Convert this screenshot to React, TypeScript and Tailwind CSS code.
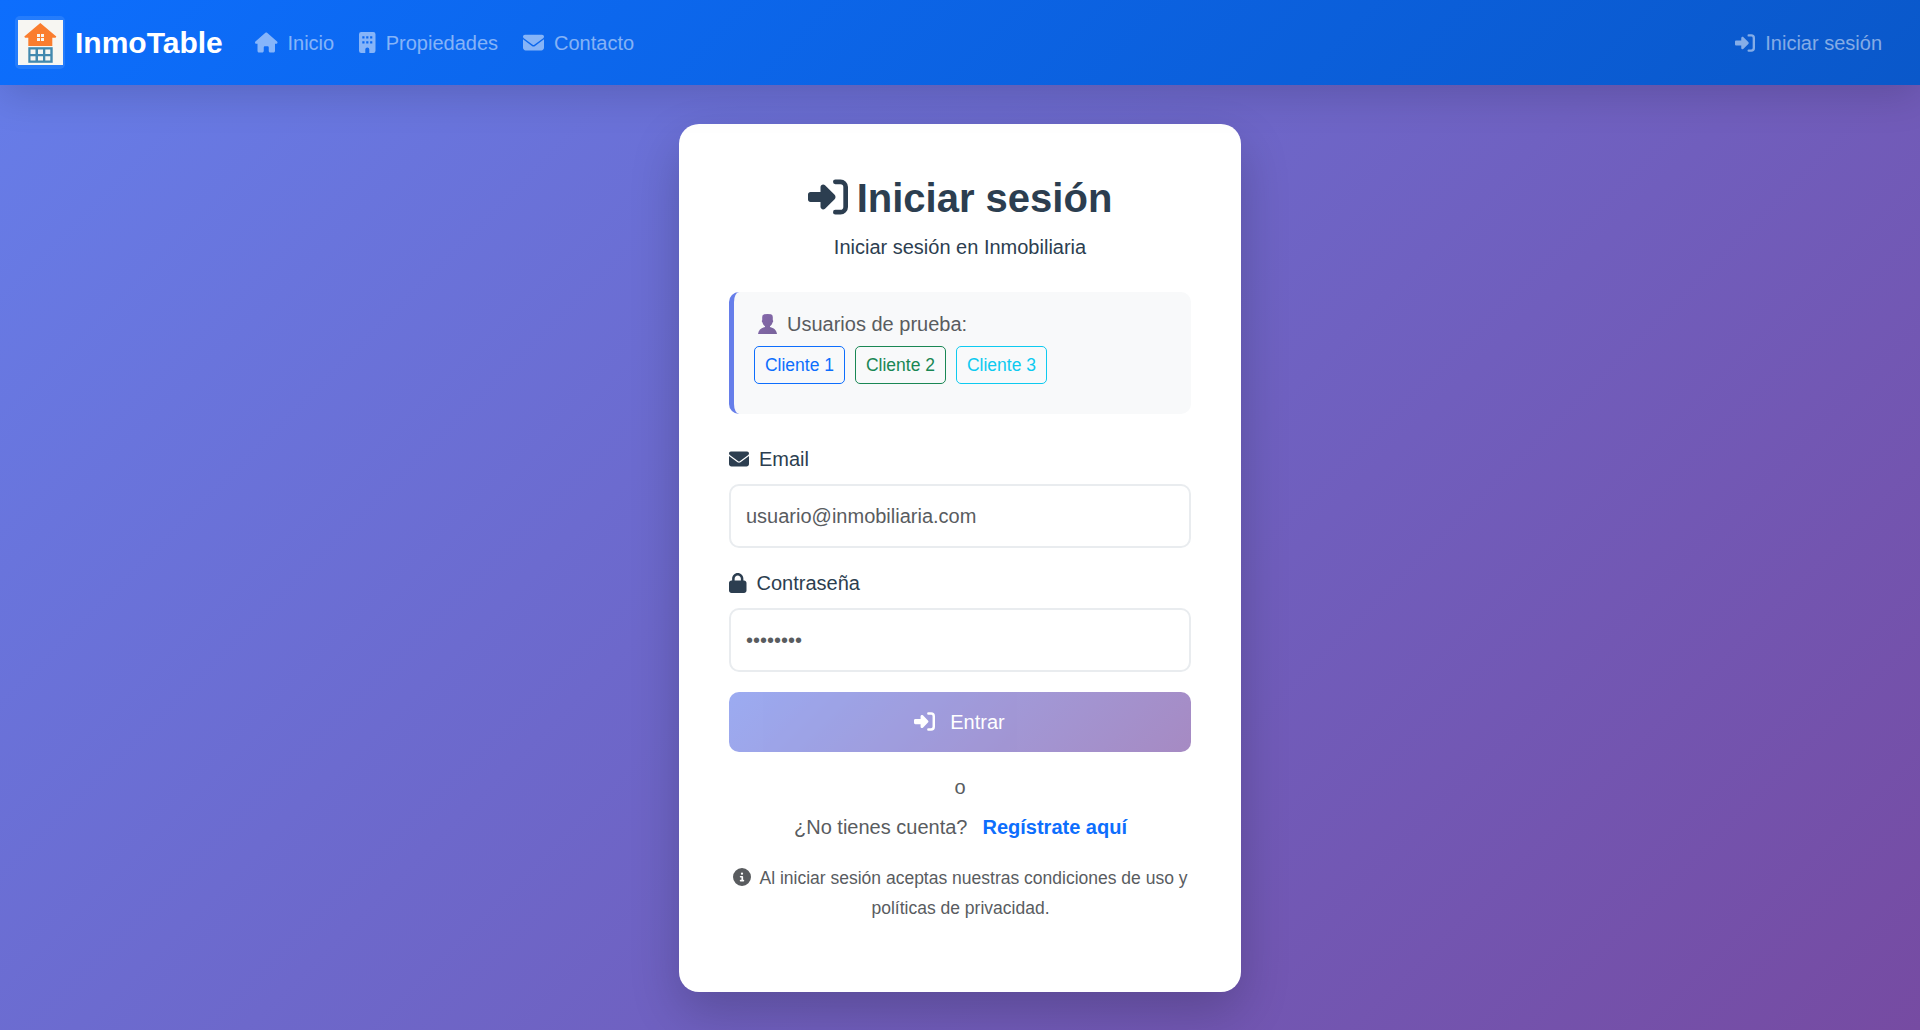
import type { ReactNode } from "react";
import { FaCircleInfo, FaEnvelope, FaHouse, FaLock } from "react-icons/fa6";

function Logo() {
  return (
    <span className="flex h-[53px] w-[50px] items-center justify-center rounded-[5px] bg-white/10">
      <svg width="45" height="45" viewBox="0 0 45 45">
        <rect width="45" height="45" fill="#f7f6f2" />
        <path d="M22.3 3L38.3 16.6L37.6 17.8H34.3V26H10.3V17.8H7L6.3 16.6Z" fill="#fa7d2e" />
        <path d="M19 14h3v3h-3zM23 14h3v3h-3zM19 18h3v3h-3zM23 18h3v3h-3z" fill="#f7f6f2" />
        <rect x="10.3" y="27.2" width="24.4" height="15.6" fill="#4389ae" />
        <path
          d="M12.5 29.5h5v4.5h-5zM20 29.5h5v4.5h-5zM27.3 29.5h5v4.5h-5zM12.5 36.3h5v4.2h-5zM20 36.3h5v4.2h-5zM27.3 36.3h5v4.2h-5z"
          fill="#f7f6f2"
        />
      </svg>
    </span>
  );
}

function LoginIcon({ className }: { className: string }) {
  return (
    <svg viewBox="0 0 512 512" className={className}>
      <path
        d="M217.9 105.9L340.7 228.7c7.2 7.2 11.3 17.1 11.3 27.3s-4.1 20.1-11.3 27.3L217.9 406.1c-6.4 6.4-15 9.9-24 9.9-18.7 0-33.9-15.2-33.9-33.9l0-62.1L32 320c-17.7 0-32-14.3-32-32l0-64c0-17.7 14.3-32 32-32l128 0 0-62.1c0-18.7 15.2-33.9 33.9-33.9 9 0 17.6 3.6 24 9.9z"
        fill="currentColor"
      />
      <path
        d="M350 62H416a66 66 0 0 1 66 66V384a66 66 0 0 1-66 66H350"
        fill="none"
        stroke="currentColor"
        strokeWidth="60"
        strokeLinecap="round"
      />
    </svg>
  );
}

function BuildingIcon() {
  return (
    <svg width="16.5" height="21" viewBox="0 0 16.5 21" fill="currentColor">
      <path
        fillRule="evenodd"
        d="M2.2 0H14.3A2.2 2.2 0 0 1 16.5 2.2V18.8A2.2 2.2 0 0 1 14.3 21H10.3V17.5A2 2 0 0 0 6.3 17.5V21H2.2A2.2 2.2 0 0 1 0 18.8V2.2A2.2 2.2 0 0 1 2.2 0ZM3.3 4.3V6.5H5.5V4.3ZM7.2 4.3V6.5H9.4V4.3ZM11.1 4.3V6.5H13.3V4.3ZM3.3 9.3V11.5H5.5V9.3ZM7.2 9.3V11.5H9.4V9.3ZM11.1 9.3V11.5H13.3V9.3Z"
      />
    </svg>
  );
}

function UserGlyph() {
  return (
    <svg width="19" height="20" viewBox="0 0 19 20">
      <defs>
        <linearGradient id="user" x1="0" y1="0" x2="1" y2="1">
          <stop offset="0" stopColor="#8668ad" />
          <stop offset="1" stopColor="#78639a" />
        </linearGradient>
      </defs>
      <path
        d="M6.2 .3Q9.5-.3 13 .3Q14.8 .8 14.8 3V6.2C15.4 6.4 15.3 8.2 14.5 8.6C14.1 10.3 13.2 11.6 12 12.3V13C15.8 14 18.4 15.9 19 20H0C.6 15.9 3.2 14 7 13V12.3C5.8 11.6 4.9 10.3 4.5 8.6C3.7 8.2 3.6 6.4 4.2 6.2V3Q4.2 .8 6.2 .3Z"
        fill="url(#user)"
      />
    </svg>
  );
}

function NavLink({ icon, children }: { icon: ReactNode; children: ReactNode }) {
  return (
    <a className="flex items-center gap-2.5 text-white/50">
      {icon}
      <span>{children}</span>
    </a>
  );
}

function Field({
  icon,
  label,
  type,
  placeholder,
}: {
  icon: ReactNode;
  label: string;
  type: string;
  placeholder: string;
}) {
  return (
    <label className="mb-5 block">
      <span className="mb-2.5 flex h-[30px] items-center gap-2.5">
        {icon}
        {label}
      </span>
      <input
        type={type}
        placeholder={placeholder}
        className="block h-16 w-full rounded-[10px] border-2 border-[#e9ecef] bg-white px-[15px] placeholder:text-[#595c5f]"
      />
    </label>
  );
}

export default function App() {
  return (
    <div className="flex h-[1030px] flex-col overflow-hidden bg-[linear-gradient(135deg,#667eea_0%,#764ba2_100%)] font-['Liberation_Sans',Arial,sans-serif] text-[20px] leading-[30px] text-[#2c3e50]">
      <nav className="z-10 flex h-[85px] shrink-0 items-center bg-[linear-gradient(135deg,#0d6efd_0%,#0a58ca_100%)] pr-[38px] pl-[15px] shadow-[0_10px_40px_rgba(0,0,0,0.15)]">
        <a className="flex w-60 items-center gap-2.5">
          <Logo />
          <span className="text-[30px] font-bold text-white">InmoTable</span>
        </a>
        <div className="flex gap-[25px]">
          <NavLink icon={<FaHouse className="h-[21px] w-[22.5px]" />}>Inicio</NavLink>
          <NavLink icon={<BuildingIcon />}>Propiedades</NavLink>
          <NavLink icon={<FaEnvelope className="size-[21px]" />}>Contacto</NavLink>
        </div>
        <div className="ml-auto">
          <NavLink icon={<LoginIcon className="size-5" />}>Iniciar sesión</NavLink>
        </div>
      </nav>

      <main className="flex justify-center pt-[39px]">
        <section className="h-[868px] w-[562px] rounded-[20px] bg-white p-[50px] shadow-[0_20px_50px_rgba(0,0,0,0.2)]">
          <h1 className="flex h-12 items-center justify-center gap-[9px] text-[40px] leading-[48px] font-bold">
            <LoginIcon className="mb-0.5 size-10" />
            Iniciar sesión
          </h1>
          <p className="mt-2.5 text-center">Iniciar sesión en Inmobiliaria</p>

          <div className="mt-[30px] h-[122px] rounded-[10px] border-l-[5px] border-[#667eea] bg-[#f8f9fa] px-5 pt-[17px]">
            <p className="flex items-center gap-[10px] pl-1 text-[#595c5f]">
              <UserGlyph />
              Usuarios de prueba:
            </p>
            <div className="mt-[7px] flex gap-2.5 text-[17.5px] leading-[26px]">
              <button className="h-[38px] w-[91px] rounded-[5px] border border-[#0d6efd] text-[#0d6efd]">Cliente 1</button>
              <button className="h-[38px] w-[91px] rounded-[5px] border border-[#198754] text-[#198754]">Cliente 2</button>
              <button className="h-[38px] w-[91px] rounded-[5px] border border-[#0dcaf0] text-[#0dcaf0]">Cliente 3</button>
            </div>
          </div>

          <form className="mt-[30px]">
            <Field icon={<FaEnvelope className="size-5" />} label="Email" type="email" placeholder="usuario@inmobiliaria.com" />
            <Field icon={<FaLock className="h-5 w-[17.5px]" />} label="Contraseña" type="password" placeholder="••••••••" />
            <button
              type="button"
              className="flex h-[60px] w-full items-center justify-center gap-[15px] rounded-[10px] bg-[linear-gradient(135deg,#667eea_0%,#764ba2_100%)] pr-px pb-px text-white opacity-65"
            >
              <LoginIcon className="size-[21px]" />
              Entrar
            </button>
          </form>

          <p className="mt-5 text-center text-[#595c5f]">o</p>
          <p className="mt-2.5 flex justify-center gap-[15px] pl-px text-[#595c5f]">
            ¿No tienes cuenta?
            <a className="font-bold text-[#0d6efd]">Regístrate aquí</a>
          </p>
          <p className="mt-[21px] pl-px text-center text-[17.5px] text-[#595c5f]">
            <FaCircleInfo className="mr-2 inline-block size-[18px] align-[-2px]" />
            Al iniciar sesión aceptas nuestras condiciones de uso y políticas de privacidad.
          </p>
        </section>
      </main>
    </div>
  );
}
